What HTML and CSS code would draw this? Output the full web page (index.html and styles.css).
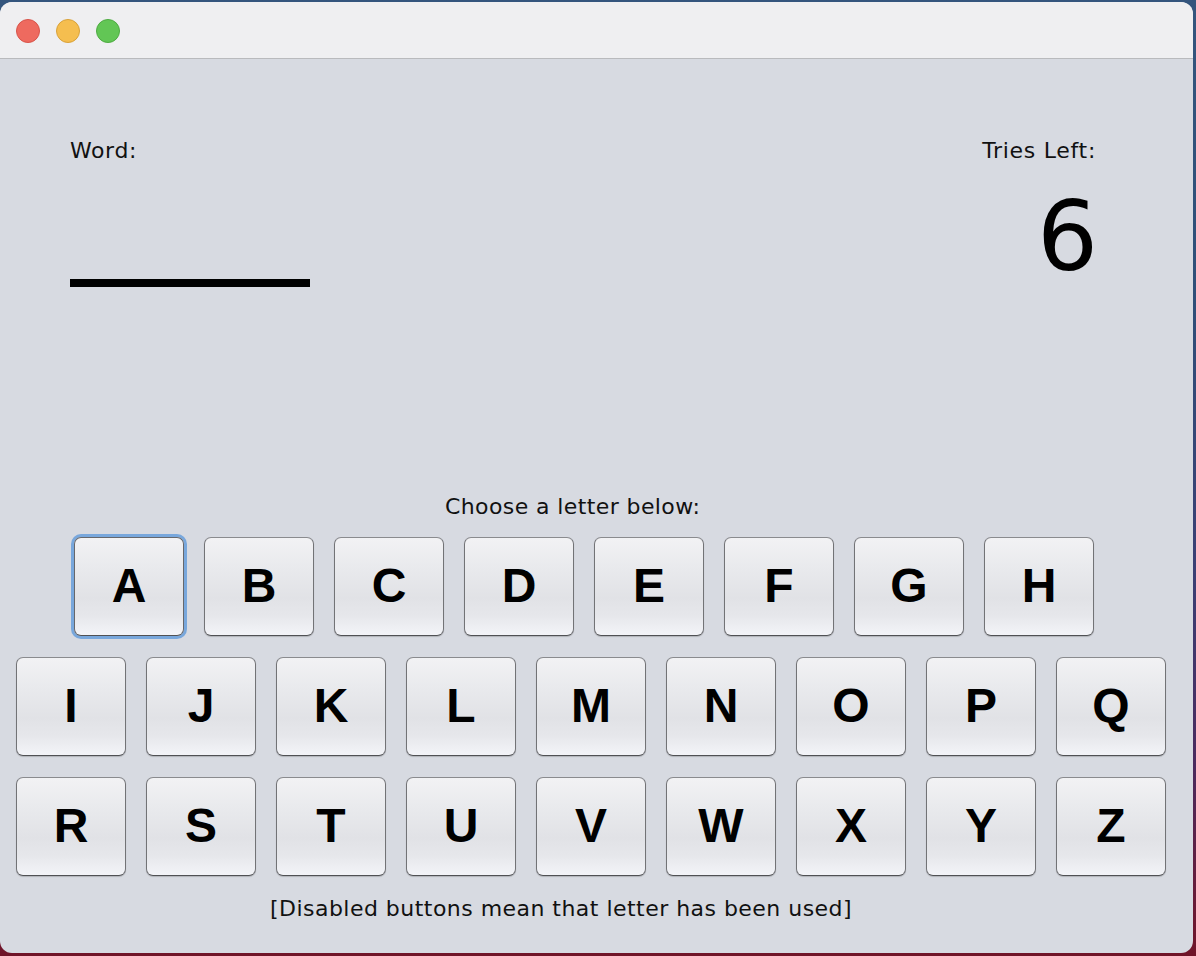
FILE: index.html
```html
<!DOCTYPE html>
<html>
<head>
<meta charset="utf-8">
<title>Hangman</title>
<link rel="stylesheet" href="styles.css">
</head>
<body>
<div class="window">
  <div class="titlebar">
    <span class="light red"></span>
    <span class="light yellow"></span>
    <span class="light green"></span>
  </div>
  <div class="content">
    <div class="top">
      <div class="word-col">
        <div class="label">Word:</div>
        <div class="blanks"></div>
      </div>
      <div class="tries-col">
        <div class="label">Tries Left:</div>
        <div class="tries">6</div>
      </div>
    </div>
    <div class="choose">Choose a letter below:</div>
    <div class="keys">
      <div class="row row-1">
        <button class="key focused">A</button>
        <button class="key">B</button>
        <button class="key">C</button>
        <button class="key">D</button>
        <button class="key">E</button>
        <button class="key">F</button>
        <button class="key">G</button>
        <button class="key">H</button>
      </div>
      <div class="row row-2">
        <button class="key">I</button>
        <button class="key">J</button>
        <button class="key">K</button>
        <button class="key">L</button>
        <button class="key">M</button>
        <button class="key">N</button>
        <button class="key">O</button>
        <button class="key">P</button>
        <button class="key">Q</button>
      </div>
      <div class="row row-2">
        <button class="key">R</button>
        <button class="key">S</button>
        <button class="key">T</button>
        <button class="key">U</button>
        <button class="key">V</button>
        <button class="key">W</button>
        <button class="key">X</button>
        <button class="key">Y</button>
        <button class="key">Z</button>
      </div>
    </div>
    <div class="note">[Disabled buttons mean that letter has been used]</div>
  </div>
</div>
</body>
</html>
```

FILE: styles.css
```css
html, body {
  margin: 0;
  padding: 0;
}

body {
  width: 1196px;
  height: 956px;
  overflow: hidden;
  background: linear-gradient(to bottom, #34557d 0%, #2f4f78 30%, #3b3f74 60%, #4b2a5e 80%, #6a1a35 95%, #701428 100%);
}

.window {
  margin-top: 2px;
  width: 1193px;
  height: 951px;
  border-radius: 12px;
  overflow: hidden;
  background: #d7dae1;
  display: flex;
  flex-direction: column;
}

.titlebar {
  height: 55px;
  background: #efeff1;
  border-bottom: 1px solid #b9babd;
  display: flex;
  align-items: center;
  gap: 16px;
  padding-left: 16px;
  padding-top: 1px;
  box-sizing: content-box;
}

.light {
  width: 22px;
  height: 22px;
  border-radius: 50%;
  display: block;
}

.light.red {
  background: #ee6a5f;
  border: 1px solid #d8544a;
}

.light.yellow {
  background: #f5be4f;
  border: 1px solid #d9a23a;
}

.light.green {
  background: #62c655;
  border: 1px solid #4eab42;
}

.content {
  flex: 1;
  display: flex;
  flex-direction: column;
  font-family: "DejaVu Sans", "Liberation Sans", sans-serif;
  color: #111;
}

.top {
  height: 356px;
  padding: 79px 97px 0 70px;
  display: flex;
  justify-content: space-between;
}

.label {
  font-size: 22px;
  line-height: 26px;
  letter-spacing: 0.7px;
}

.word-col .label {
  letter-spacing: 0.6px;
}

.blanks {
  margin-top: 115px;
  width: 240px;
  height: 8px;
  background: #000;
}

.tries-col {
  text-align: right;
}

.tries {
  margin-top: 25px;
  font-size: 96px;
  line-height: 96px;
  color: #000;
  margin-right: -2px;
}

.choose {
  font-size: 22px;
  line-height: 26px;
  letter-spacing: 0.4px;
  padding-left: 445px;
}

.keys {
  margin-top: 17px;
  display: flex;
  flex-direction: column;
  gap: 21px;
}

.row {
  display: flex;
  gap: 20px;
}

.row-1 {
  padding-left: 74px;
}

.row-2 {
  padding-left: 16px;
}

.key {
  width: 110px;
  height: 99px;
  margin: 0;
  padding: 0 0 2px 0;
  border: 1px solid #727376;
  border-top-color: #8a8b8e;
  border-bottom-color: #505154;
  border-radius: 7px;
  background: linear-gradient(to bottom, #f2f2f4 0%, #e9eaed 30%, #e1e2e6 62%, #e6e7eb 80%, #f3f4f8 100%);
  box-shadow: 0 1px 1px rgba(0, 0, 0, 0.18);
  font-family: "Liberation Sans", Arial, sans-serif;
  font-weight: bold;
  font-size: 48px;
  line-height: 1;
  color: #000;
  display: flex;
  align-items: center;
  justify-content: center;
}

.key.focused {
  box-shadow: 0 0 0 3px #78a7dc;
  border-color: #66676b;
  border-bottom-color: #505154;
}

.note {
  margin-top: 20px;
  font-size: 22px;
  line-height: 26px;
  letter-spacing: 0.47px;
  padding-left: 270px;
}
```
